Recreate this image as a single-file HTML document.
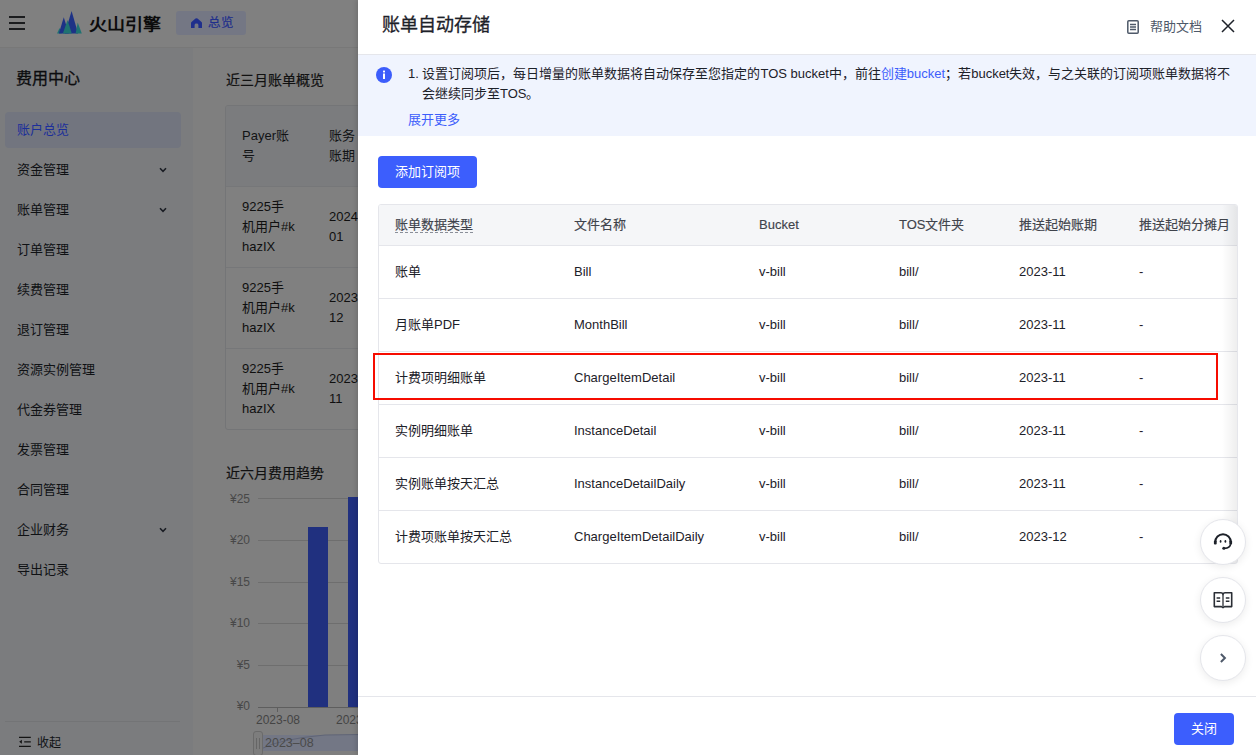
<!DOCTYPE html>
<html lang="zh-CN"><head><meta charset="utf-8">
<style>
*{box-sizing:border-box;margin:0;padding:0}
html,body{width:1256px;height:755px;overflow:hidden}
body{font-family:"Liberation Sans",sans-serif;background:#7f7f7f;position:relative;color:#1d2129}
.a{position:absolute;white-space:nowrap}
/* background page (already dimmed colours) */
#hdr{left:0;top:0;width:1256px;height:47px;background:#808080}
#hline{left:0;top:47px;width:1256px;height:1px;background:#787878;z-index:2}
#side{left:0;top:47px;width:193px;height:708px;background:#7b7c7e}
.nav{left:17px;font-size:13px;color:#0f1114;line-height:16px}
.chev{left:159px;width:8px;height:6px}
.med{-webkit-text-stroke:0.3px currentColor}
.med2{-webkit-text-stroke:0.2px currentColor}
/* drawer */
#drawer{z-index:5;left:358px;top:0;width:898px;height:755px;background:#fff;box-shadow:-2px 0 4px rgba(0,0,0,.12)}
.d{position:absolute;white-space:nowrap}
.th{font-size:13px;color:#3f434b;line-height:16px;-webkit-text-stroke:0.15px #3f434b}
.td{font-size:13px;color:#1d2129;line-height:16px}
.hline{position:absolute;left:0;width:860px;height:1px;background:#e5e6eb}
.fab{position:absolute;left:842px;width:46px;height:46px;border-radius:50%;background:#fff;border:1px solid #e5e6eb;box-shadow:0 2px 8px rgba(0,0,0,.08)}
</style></head><body>

<!-- ===== background page ===== -->
<div id="hdr" class="a"></div>
<!-- hamburger -->
<div class="a" style="left:9px;top:16px;width:16px;height:2px;background:#1b1c1e"></div>
<div class="a" style="left:9px;top:22px;width:16px;height:2px;background:#1b1c1e"></div>
<div class="a" style="left:9px;top:28px;width:16px;height:2px;background:#1b1c1e"></div>
<!-- logo -->
<svg class="a" style="left:56px;top:10px" width="27" height="25" viewBox="0 0 27 25">
  <polygon points="1,23.6 3.6,18 5.8,23.6" fill="#1f7271"/>
  <polygon points="2.8,23.6 7.8,7.3 12.8,23.6" fill="#1d3286"/>
  <polygon points="8.8,23.6 15.6,1 22.1,23.6" fill="#1d3286"/>
  <polygon points="6.9,23.6 11.5,9.9 15.8,23.6" fill="#1f7271"/>
  <polygon points="19.6,23.6 21.7,12.5 25.8,23.6" fill="#1f7271"/>
</svg>
<div class="a" style="left:89px;top:13px;font-size:18px;font-weight:bold;color:#0c0c0c;line-height:22px;transform:scaleY(0.91);transform-origin:50% 100%">火山引擎</div>
<div class="a" style="left:176px;top:11px;width:70px;height:24px;border-radius:3px;background:#747784"></div>
<svg class="a" style="left:191px;top:18px" width="11" height="10" viewBox="0 0 11 10"><path d="M5.5 0.2 Q6 0.2 6.5 0.6 L10.5 3.9 Q11 4.3 11 4.9 V10 H7.4 V6.9 Q7.4 5.5 5.5 5.5 Q3.6 5.5 3.6 6.9 V10 H0 V4.9 Q0 4.3 0.5 3.9 L4.5 0.6 Q5 0.2 5.5 0.2Z" fill="#1f2f8c"/></svg>
<div class="a" style="left:208px;top:15px;font-size:12.5px;color:#1f2f8c;line-height:16px;-webkit-text-stroke:0.2px #1f2f8c">总览</div>

<div id="side" class="a"></div>
<div id="hline" class="a"></div>
<div class="a med" style="left:16px;top:69px;font-size:16px;color:#0c0d0f;line-height:20px">费用中心</div>
<div class="a" style="left:5px;top:112px;width:176px;height:36px;border-radius:4px;background:#72757f"></div>
<div class="a nav" style="top:122px;color:#1c2f9a">账户总览</div>
<div class="a nav" style="top:162px">资金管理</div><svg class="a chev" style="top:167px" viewBox="0 0 8 6"><path d="M1 1.3 L4 4.3 L7 1.3" stroke="#1a1d24" stroke-width="1.6" fill="none"/></svg>
<div class="a nav" style="top:202px">账单管理</div><svg class="a chev" style="top:207px" viewBox="0 0 8 6"><path d="M1 1.3 L4 4.3 L7 1.3" stroke="#1a1d24" stroke-width="1.6" fill="none"/></svg>
<div class="a nav" style="top:242px">订单管理</div>
<div class="a nav" style="top:282px">续费管理</div>
<div class="a nav" style="top:322px">退订管理</div>
<div class="a nav" style="top:362px">资源实例管理</div>
<div class="a nav" style="top:402px">代金券管理</div>
<div class="a nav" style="top:442px">发票管理</div>
<div class="a nav" style="top:482px">合同管理</div>
<div class="a nav" style="top:522px">企业财务</div><svg class="a chev" style="top:527px" viewBox="0 0 8 6"><path d="M1 1.3 L4 4.3 L7 1.3" stroke="#1a1d24" stroke-width="1.6" fill="none"/></svg>
<div class="a nav" style="top:562px">导出记录</div>
<div class="a" style="left:5px;top:721px;width:175px;height:1px;background:#737476"></div>
<svg class="a" style="left:18px;top:736px" width="14" height="12" viewBox="0 0 14 12"><path d="M1 1.4H12.8M6.2 5.8H12.8M1 10.4H12.8" stroke="#141414" stroke-width="1.3" fill="none"/><path d="M1.2 5.8L3.9 3.8V7.8Z" fill="#141414"/></svg>
<div class="a nav" style="left:37px;top:735px;font-size:12px">收起</div>

<!-- main -->
<div class="a med2" style="left:226px;top:72px;font-size:14px;color:#111;line-height:16px">近三月账单概览</div>
<div class="a" style="left:225px;top:105px;width:160px;height:325px;border:1px solid #747577;border-radius:3px;background:#808080;overflow:hidden">
  <div style="position:absolute;left:0;top:0;width:200px;height:81px;background:#7b7c7e;border-bottom:1px solid #767779"></div>
  <div style="position:absolute;left:0;top:161px;width:200px;height:1px;background:#767779"></div>
  <div style="position:absolute;left:0;top:242px;width:200px;height:1px;background:#767779"></div>
  <div style="position:absolute;left:16px;top:20px;font-size:13px;line-height:20px;color:#121315;white-space:normal;width:62px">Payer账<br>号</div>
  <div style="position:absolute;left:103px;top:20px;font-size:13px;line-height:20px;color:#121315">账务<br>账期</div>
  <div style="position:absolute;left:16px;top:91px;font-size:13px;line-height:20px;color:#0f0f0f">9225手<br>机用户#k<br>hazIX</div>
  <div style="position:absolute;left:103px;top:101px;font-size:13px;line-height:20px;color:#0f0f0f">2024<br>01</div>
  <div style="position:absolute;left:16px;top:172px;font-size:13px;line-height:20px;color:#0f0f0f">9225手<br>机用户#k<br>hazIX</div>
  <div style="position:absolute;left:103px;top:182px;font-size:13px;line-height:20px;color:#0f0f0f">2023<br>12</div>
  <div style="position:absolute;left:16px;top:253px;font-size:13px;line-height:20px;color:#0f0f0f">9225手<br>机用户#k<br>hazIX</div>
  <div style="position:absolute;left:103px;top:263px;font-size:13px;line-height:20px;color:#0f0f0f">2023<br>11</div>
</div>
<div class="a med2" style="left:226px;top:465px;font-size:14px;color:#111;line-height:16px">近六月费用趋势</div>
<!-- chart -->
<div class="a" style="left:258px;top:498px;width:100px;height:1px;background:#6e6e6e"></div>
<div class="a" style="left:258px;top:540px;width:100px;height:1px;background:#6e6e6e"></div>
<div class="a" style="left:258px;top:582px;width:100px;height:1px;background:#6e6e6e"></div>
<div class="a" style="left:258px;top:623px;width:100px;height:1px;background:#6e6e6e"></div>
<div class="a" style="left:258px;top:665px;width:100px;height:1px;background:#6e6e6e"></div>
<div class="a" style="left:258px;top:707px;width:100px;height:1px;background:#5e5e5e"></div>
<div class="a" style="left:277px;top:708px;width:1px;height:4px;background:#5e5e5e"></div>
<div class="a" style="left:308px;top:527px;width:20px;height:180px;background:#20307f"></div>
<div class="a" style="left:348px;top:497px;width:12px;height:210px;background:#20307f"></div>
<div class="a" style="left:220px;top:492px;width:30px;text-align:right;font-size:12px;color:#484848;line-height:14px">¥25</div>
<div class="a" style="left:220px;top:533px;width:30px;text-align:right;font-size:12px;color:#484848;line-height:14px">¥20</div>
<div class="a" style="left:220px;top:575px;width:30px;text-align:right;font-size:12px;color:#484848;line-height:14px">¥15</div>
<div class="a" style="left:220px;top:616px;width:30px;text-align:right;font-size:12px;color:#484848;line-height:14px">¥10</div>
<div class="a" style="left:220px;top:658px;width:30px;text-align:right;font-size:12px;color:#484848;line-height:14px">¥5</div>
<div class="a" style="left:220px;top:699px;width:30px;text-align:right;font-size:12px;color:#484848;line-height:14px">¥0</div>
<div class="a" style="left:256px;top:713px;font-size:12px;color:#444;line-height:14px">2023-08</div>
<div class="a" style="left:336px;top:713px;font-size:12px;color:#444;line-height:14px">2023</div>
<div class="a" style="left:262px;top:735px;width:100px;height:16px;background:#737785"></div>
<svg class="a" style="left:240px;top:725px" width="120" height="30"><path d="M22 23.5 Q40 14 85 10 L120 9.5" stroke="#5f6476" stroke-width="1" fill="none"/></svg>
<div class="a" style="left:253px;top:731px;width:10px;height:25px;border:1px solid #6a6a6a;border-radius:3px;background:#7d7d7d"></div>
<div class="a" style="left:256px;top:738px;width:1px;height:11px;background:#666"></div>
<div class="a" style="left:259px;top:738px;width:1px;height:11px;background:#666"></div>
<div class="a" style="left:265px;top:736px;font-size:12.5px;color:#4a4a4a;line-height:14px">2023–08</div>

<!-- ===== drawer ===== -->
<div id="drawer" class="a">
  <div class="d med" style="left:24px;top:14px;font-size:18px;color:#1d2129;line-height:22px">账单自动存储</div>
  <svg class="d" style="left:769px;top:20px" width="12" height="14" viewBox="0 0 12 14"><rect x="0.8" y="0.8" width="10.4" height="12.4" rx="1" stroke="#4e5969" stroke-width="1.5" fill="none"/><path d="M3 4.5H9M3 7H9M3 9.5H9" stroke="#4e5969" stroke-width="1.3"/></svg>
  <div class="d" style="left:792px;top:19px;font-size:13px;color:#4e5969;line-height:16px">帮助文档</div>
  <svg class="d" style="left:863px;top:19px" width="14" height="14" viewBox="0 0 14 14"><path d="M1 1L13 13M13 1L1 13" stroke="#1d2129" stroke-width="1.5"/></svg>
  <div class="d" style="left:0;top:54px;width:898px;height:1px;background:#e5e6eb"></div>

  <!-- alert -->
  <div class="d" style="left:0;top:55px;width:898px;height:81px;background:#f0f4fe"></div>
  <svg class="d" style="left:18px;top:67px" width="16" height="16" viewBox="0 0 16 16"><circle cx="8" cy="8" r="8" fill="#3c5dfb"/><rect x="7" y="6.5" width="2" height="5.5" fill="#fff"/><rect x="7" y="3.6" width="2" height="1.8" fill="#fff"/></svg>
  <div class="d" style="left:50px;top:64px;font-size:13px;color:#1d2129;line-height:20px">1. 设置订阅项后，每日增量的账单数据将自动保存至您指定的TOS bucket中，前往<span style="color:#3c5dfb">创建bucket</span>；若bucket失效，与之关联的订阅项账单数据将不</div>
  <div class="d" style="left:64px;top:84px;font-size:13px;color:#1d2129;line-height:20px">会继续同步至TOS。</div>
  <div class="d" style="left:50px;top:112px;font-size:13px;color:#3c5dfb;line-height:16px">展开更多</div>

  <!-- add button -->
  <div class="d" style="left:20px;top:156px;width:99px;height:32px;border-radius:4px;background:#3c5efd;color:#fff;font-size:13px;line-height:32px;text-align:center">添加订阅项</div>

  <!-- table -->
  <div class="d" style="left:20px;top:204px;width:860px;height:360px;border:1px solid #e5e6eb;border-radius:3px;overflow:hidden">
    <div class="d" style="left:0;top:0;width:860px;height:40px;background:#f5f6f8"></div>
    <div class="hline" style="top:40px"></div>
    <div class="hline" style="top:93px"></div>
    <div class="hline" style="top:146px"></div>
    <div class="hline" style="top:199px"></div>
    <div class="hline" style="top:252px"></div>
    <div class="hline" style="top:305px"></div>
    <div class="d" style="left:843px;top:0;width:16px;height:360px;background:linear-gradient(to right,rgba(0,0,0,0),rgba(0,0,0,.07))"></div>
    <!-- header -->
    <div class="d th" style="left:16px;top:12px;border-bottom:1px dashed #8a8f99;line-height:15px">账单数据类型</div>
    <div class="d th" style="left:195px;top:12px">文件名称</div>
    <div class="d th" style="left:380px;top:12px">Bucket</div>
    <div class="d th" style="left:520px;top:12px">TOS文件夹</div>
    <div class="d th" style="left:640px;top:12px">推送起始账期</div>
    <div class="d th" style="left:760px;top:12px">推送起始分摊月</div>
  </div>
  <div class="d td" style="left:37px;top:264px">账单</div>
  <div class="d td" style="left:216px;top:264px">Bill</div>
  <div class="d td" style="left:401px;top:264px">v-bill</div>
  <div class="d td" style="left:541px;top:264px">bill/</div>
  <div class="d td" style="left:661px;top:264px">2023-11</div>
  <div class="d td" style="left:781px;top:264px">-</div>
  <div class="d td" style="left:37px;top:317px">月账单PDF</div>
  <div class="d td" style="left:216px;top:317px">MonthBill</div>
  <div class="d td" style="left:401px;top:317px">v-bill</div>
  <div class="d td" style="left:541px;top:317px">bill/</div>
  <div class="d td" style="left:661px;top:317px">2023-11</div>
  <div class="d td" style="left:781px;top:317px">-</div>
  <div class="d td" style="left:37px;top:370px">计费项明细账单</div>
  <div class="d td" style="left:216px;top:370px">ChargeItemDetail</div>
  <div class="d td" style="left:401px;top:370px">v-bill</div>
  <div class="d td" style="left:541px;top:370px">bill/</div>
  <div class="d td" style="left:661px;top:370px">2023-11</div>
  <div class="d td" style="left:781px;top:370px">-</div>
  <div class="d td" style="left:37px;top:423px">实例明细账单</div>
  <div class="d td" style="left:216px;top:423px">InstanceDetail</div>
  <div class="d td" style="left:401px;top:423px">v-bill</div>
  <div class="d td" style="left:541px;top:423px">bill/</div>
  <div class="d td" style="left:661px;top:423px">2023-11</div>
  <div class="d td" style="left:781px;top:423px">-</div>
  <div class="d td" style="left:37px;top:476px">实例账单按天汇总</div>
  <div class="d td" style="left:216px;top:476px">InstanceDetailDaily</div>
  <div class="d td" style="left:401px;top:476px">v-bill</div>
  <div class="d td" style="left:541px;top:476px">bill/</div>
  <div class="d td" style="left:661px;top:476px">2023-11</div>
  <div class="d td" style="left:781px;top:476px">-</div>
  <div class="d td" style="left:37px;top:529px">计费项账单按天汇总</div>
  <div class="d td" style="left:216px;top:529px">ChargeItemDetailDaily</div>
  <div class="d td" style="left:401px;top:529px">v-bill</div>
  <div class="d td" style="left:541px;top:529px">bill/</div>
  <div class="d td" style="left:661px;top:529px">2023-12</div>
  <div class="d td" style="left:781px;top:529px">-</div>

  <!-- red highlight -->
  <div class="d" style="left:15px;top:353px;width:845px;height:47px;border:2px solid #f60c00"></div>

  <!-- floating buttons -->
  <div class="fab" style="top:519px"></div>
  <svg class="d" style="left:853px;top:529px" width="24" height="24" viewBox="0 0 24 24" fill="none">
    <path d="M4.2 13 A7.8 7.8 0 0 1 19.8 13" stroke="#1d2129" stroke-width="1.9"/>
    <rect x="2.9" y="11.6" width="2.8" height="3.8" rx="1" fill="#1d2129"/>
    <rect x="18.3" y="11.6" width="2.8" height="3.8" rx="1" fill="#1d2129"/>
    <ellipse cx="9.6" cy="12.4" rx="0.9" ry="1.4" fill="#1d2129"/>
    <ellipse cx="14.4" cy="12.4" rx="0.9" ry="1.4" fill="#1d2129"/>
    <path d="M19.6 15.2 Q19 19 13.5 19.4" stroke="#1d2129" stroke-width="1.7"/>
    <circle cx="12.8" cy="19.3" r="1.5" fill="#1d2129"/>
  </svg>
  <div class="fab" style="top:577px"></div>
  <svg class="d" style="left:853px;top:588px" width="24" height="24" viewBox="0 0 24 24" fill="none">
    <path d="M3.3 4.7 H9.8 Q12 4.7 12 6.6 Q12 4.7 14.2 4.7 H20.7 V18.6 H13.6 L12 19.6 L10.4 18.6 H3.3 Z" stroke="#2a2e35" stroke-width="1.6" stroke-linejoin="round"/>
    <path d="M12 6.6 V18.8" stroke="#2a2e35" stroke-width="1.3"/>
    <path d="M5.6 9.9H9.2M5.6 13.3H9.2M14.8 9.9H18.4M14.8 13.3H18.4" stroke="#2a2e35" stroke-width="1.5"/>
  </svg>
  <div class="fab" style="top:635px"></div>
  <svg class="d" style="left:853px;top:646px" width="24" height="24" viewBox="0 0 24 24" fill="none">
    <path d="M9.9 8 L13.9 12 L9.9 16" stroke="#4e5969" stroke-width="2"/>
  </svg>

  <!-- footer -->
  <div class="d" style="left:0;top:696px;width:898px;height:1px;background:#e5e6eb"></div>
  <div class="d" style="left:816px;top:713px;width:60px;height:32px;border-radius:4px;background:#3c5efd;color:#fff;font-size:13px;line-height:32px;text-align:center">关闭</div>
</div>
</body></html>
